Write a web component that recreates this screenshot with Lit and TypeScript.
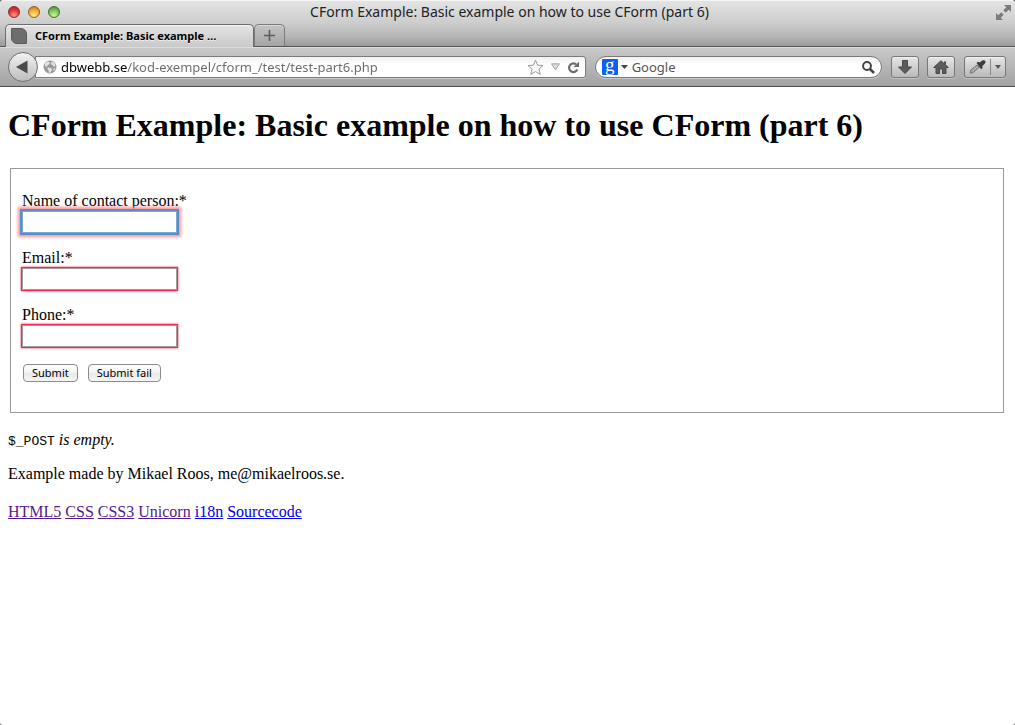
import { LitElement, html, css, nothing } from "lit";
import { customElement, property } from "lit/decorators.js";

@customElement("browser-chrome")
class BrowserChrome extends LitElement {
  @property() pageTitle = "";
  @property() address = "";

  static styles = css`
    :host { display: block; font-family: "Noto Sans", "Open Sans", sans-serif; font-size: 13px; color: #222; }
    * { box-sizing: border-box; }
    svg { display: block; flex: none; }
    button { font: inherit; color: inherit; padding: 0; margin: 0; border: 0; background: none; }
    .top {
      background: linear-gradient(#e4e4e4, #cccccc 50%, #b4b4b4 80%, #9b9b9b);
      border-top: 1px solid #f4f4f4;
      border-bottom: 1px solid #555;
      border-radius: 4px 4px 0 0;
      height: 47px;
    }
    .titlebar { display: grid; grid-template-columns: 1fr auto 1fr; align-items: center; height: 22px; padding: 0 4px 0 8px; }
    .lights { display: flex; gap: 8px; }
    .light { width: 12px; height: 12px; border-radius: 50%; border: 1px solid #6b4a3a; }
    .red { background: radial-gradient(circle at 50% 85%, #ff9a8d, #e8333a 55%, #a52026); border-color: #8b2b2d; }
    .amber { background: radial-gradient(circle at 50% 85%, #ffe88a, #f3ab36 55%, #b56c1c); border-color: #94602a; }
    .green { background: radial-gradient(circle at 50% 85%, #d2f5a0, #7cc254 55%, #3f8430); border-color: #3c7232; }
    .title { font-size: 14px; line-height: 20px; padding-bottom: 1px; }
    .expand { justify-self: end; }
    .tabs { display: flex; padding-left: 5px; height: 24px; padding-top: 1px; }
    .tab {
      position: relative; z-index: 1;
      width: 249px; height: 23px;
      display: flex; align-items: center; gap: 8px;
      padding: 0 5px;
      font-weight: 700; font-size: 11px; color: #000; text-align: left;
      background: linear-gradient(#e4e4e4, #c9c9c9);
      border: 1px solid #6c6c6c; border-bottom: 0;
      border-radius: 5px 5px 0 0;
      box-shadow: inset 0 1px #f5f5f5;
      text-shadow: 0 1px #eee;
    }
    .leaf { width: 16px; height: 16px; background: #6d6d6d; border: 1px solid #5a5a5a; border-radius: 0 6px 0 6px; flex: none; }
    .label { white-space: nowrap; overflow: hidden; text-overflow: ellipsis; }
    .plus {
      width: 31px; height: 22px;
      display: flex; align-items: center; justify-content: center;
      border: 1px solid #7b7b7b; border-bottom: 0; border-radius: 5px 5px 0 0;
      background: linear-gradient(#c4c4c4, #a4a4a4);
      box-shadow: inset 0 1px #d8d8d8;
    }
    .toolbar {
      display: flex; align-items: center;
      height: 40px; padding: 0 9px 0 8px;
      background: linear-gradient(#c9c9c9, #a2a2a2);
      border-top: 1px solid #dcdcdc;
      border-bottom: 1px solid #4c4c4c;
    }
    .back {
      z-index: 1; flex: none; width: 30px; height: 30px; border-radius: 50%;
      border: 1px solid #6f6f6f; background: linear-gradient(#f2f2f2, #bdbdbd);
      display: flex; align-items: center; justify-content: center;
    }
    .field {
      display: flex; align-items: center; height: 22px; min-width: 0;
      background: linear-gradient(#f1f1f1, #ffffff 40%);
      border: 1px solid #7a7a7a;
      box-shadow: 0 1px #c9c9c9;
    }
    .url { flex: 536 1 0; margin-left: -3px; border-radius: 0 3px 3px 0; padding: 0 5px 0 7px; }
    .search { flex: 273 1 0; margin-left: 9px; border-radius: 11px; padding: 0 6px; }
    input { font: inherit; flex: 1; min-width: 0; height: 18px; border: 0; padding: 0; margin: 0; outline: 0; background: none; color: #555; }
    .address {
      margin-left: 4px; color: transparent;
      background: linear-gradient(90deg, #000 66px, #6a6a6a 66px);
      -webkit-background-clip: text; background-clip: text;
    }
    .acts { display: flex; align-items: center; gap: 7px; }
    .engine { display: flex; align-items: center; gap: 3px; margin-right: 4px; }
    .g {
      width: 16px; height: 16px; background: #0f5ff5; color: #fff; border-radius: 1px;
      font: 19px/12px "Liberation Serif", serif; text-align: center;
    }
    .tool {
      flex: none; width: 28px; height: 22px; margin-left: 8px;
      display: flex; align-items: center; justify-content: center;
      border: 1px solid #777; border-radius: 3px;
      background: linear-gradient(#e6e6e6, #bababa);
      box-shadow: inset 0 1px #f0f0f0, 0 1px #c4c4c4;
    }
    .first { margin-left: 9px; }
    .wide { width: 42px; margin-left: 9px; gap: 4px; }
    .bar { width: 1px; height: 16px; background: #8a8a8a; }
  `;

  render() {
    return html`
      <header class="top">
        <div class="titlebar">
          <div class="lights">
            <button class="light red" aria-label="Close"></button>
            <button class="light amber" aria-label="Minimize"></button>
            <button class="light green" aria-label="Zoom"></button>
          </div>
          <div class="title">${this.pageTitle}</div>
          <button class="expand" aria-label="Full screen">
            <svg width="15" height="15" viewBox="0 0 15 15" fill="#7b7b7b">
              <path d="M8 0h7v7l-2.300-2.300-3 3-2.400-2.400 3-3zM7 15H0V8l2.300 2.300 3-3 2.400 2.400-3 3z" />
            </svg>
          </button>
        </div>
        <div class="tabs">
          <button class="tab"><span class="leaf"></span><span class="label">CForm Example: Basic example …</span></button>
          <button class="plus" aria-label="New tab">
            <svg width="11" height="11" viewBox="0 0 11 11"><path d="M5.500 0v11M0 5.500h11" stroke="#5d5d5d" stroke-width="1.600" /></svg>
          </button>
        </div>
      </header>
      <nav class="toolbar">
        <button class="back" aria-label="Back">
          <svg width="16" height="14" viewBox="0 0 16 14"><path d="M1 7 12.500.500v13z" fill="#4a4a4a" /></svg>
        </button>
        <div class="field url">
          <svg width="14" height="14" viewBox="0 0 14 14">
            <circle cx="7" cy="7" r="6.500" fill="#999" />
            <path d="M2 3.500 4.500 1.500l2.500.800-.600 1.900-2 1-.500 1.800L2 6zM8.500 1.500l3 1.500 1 3-1.500.800-1.500-1.800-1.500-.500zM5 7.500l3 .500 1 1.500-1.500 3-1.500.300L5.500 10 4.300 8.800zM10.500 8.500l1.800-.500-1 2.500-1 .500z" fill="#e4e4e4" />
          </svg>
          <input class="address" aria-label="Address" spellcheck="false" .value=${this.address} />
          <div class="acts">
            <button aria-label="Bookmark">
              <svg width="17" height="17" viewBox="0 0 17 17"><path d="M8.500 1.200 10.600 6.100l5.400.500-4.100 3.500 1.300 5.300-4.700-2.800-4.700 2.800 1.300-5.300L1 6.600l5.400-.500z" fill="#f8f8f8" stroke="#9a9a9a" /></svg>
            </button>
            <button aria-label="History">
              <svg width="9" height="8" viewBox="0 0 9 8"><path d="M.500.800h8L4.500 7z" fill="#dcdcdc" stroke="#a5a5a5" /></svg>
            </button>
            <button aria-label="Reload">
              <svg width="13" height="13" viewBox="0 0 13 13"><path d="M10.300 8.600A4.300 4.300 0 1 1 9 3.300" fill="none" stroke="#6e6e6e" stroke-width="2.200" /><path d="M12 .500V6H6.500z" fill="#6e6e6e" /></svg>
            </button>
          </div>
        </div>
        <div class="field search">
          <button class="engine" aria-label="Search engine">
            <span class="g">g</span>
            <svg width="7" height="4" viewBox="0 0 7 4"><path d="M0 0h7L3.500 4z" fill="#444" /></svg>
          </button>
          <input aria-label="Search" .value=${"Google"} />
          <button aria-label="Search">
            <svg width="13" height="13" viewBox="0 0 13 13" fill="none" stroke="#444"><circle cx="5" cy="5" r="3.900" stroke-width="2" /><path d="m8 8 4 4" stroke-width="2.500" /></svg>
          </button>
        </div>
        <button class="tool first" aria-label="Downloads">
          <svg width="14" height="14" viewBox="0 0 14 14"><path d="M4.500.500h5V7h4L7 13.500.500 7h4z" fill="#5c5c5c" stroke="#484848" /></svg>
        </button>
        <button class="tool" aria-label="Home">
          <svg width="16" height="14" viewBox="0 0 16 14"><path d="m8 .700 7.300 6.800H13v6H9.500V9h-3v4.500H3v-6H.700z" fill="#5c5c5c" stroke="#484848" /><path d="M11 1.500h2V5l-2-2z" fill="#484848" /></svg>
        </button>
        <button class="tool wide" aria-label="Color picker">
          <svg width="17" height="14" viewBox="0 0 17 14">
            <path d="M1 13.200 1.800 10 8 5l2.300 2.500L4 12.500z" fill="#aaa" stroke="#777" />
            <path d="m7.500 3 1.700-1.200 1.500.700L13 .500q2.500-.800 3.500.700.400 1.500-1 2.800L13.300 6l.300 2-1.500 1.200z" fill="#3d3d3d" />
          </svg>
          <span class="bar"></span>
          <svg width="6" height="4" viewBox="0 0 6 4"><path d="M0 0h6L3 4z" fill="#555" /></svg>
        </button>
      </nav>
    `;
  }
}

interface Field { id: string; label: string; focused?: boolean }
interface Link { text: string; visited: boolean }

@customElement("app-root")
class AppRoot extends LitElement {
  static styles = css`
    :host { display: block; background: #777; font-family: "Liberation Serif", "Times New Roman", serif; font-size: 16px; line-height: 18px; color: #000; }
    .window { min-height: 100vh; background: #fff; border-radius: 4px 4px 3px 3px; overflow: hidden; }
    .page { padding: 20px 8px 8px; }
    h1 { font-size: 32px; line-height: 37px; margin: 0 0 24px; }
    fieldset { margin: 0 3px 0 2px; padding: 23px 11px 30px; border: 1px solid #999; min-width: 0; }
    .row { display: flex; flex-direction: column; align-items: flex-start; gap: 1px; margin-bottom: 16px; }
    .box {
      box-sizing: border-box; width: 155px; height: 22px; padding: 2px; font: inherit;
      border: 1px solid #a09a9c; border-radius: 0; outline: 0; background: #fff;
      box-shadow: 0 0 0 1px #f5294b, 0 0 2px 1px #ff1f45;
    }
    .focused { border: 1px solid #78a9d2; box-shadow: 0 0 0 2px #5a8fc3, 0 0 3px 4px #ff8f98; }
    .buttons { display: flex; gap: 10px; padding: 1px 0 0 1px; }
    .btn {
      height: 18px; padding: 0 8px; margin: 0; border: 1px solid #8c8c8c; border-radius: 4px;
      background: linear-gradient(#ffffff, #f2f2f2 50%, #e8e8e8 51%, #f6f6f6);
      font: 11px/16px "Noto Sans", "Open Sans", sans-serif; color: #000;
    }
    .note { margin: 18px 0 15px; }
    code { font: 13px/16px "Liberation Mono", "Courier New", monospace; }
    .author { margin: 0 0 20px; }
    .links { margin: 0; }
    a { color: #0000ee; text-decoration: underline; }
    .visited { color: #551a8b; }
  `;

  private fields: Field[] = [
    { id: "name", label: "Name of contact person:*", focused: true },
    { id: "email", label: "Email:*" },
    { id: "phone", label: "Phone:*" },
  ];

  private links: Link[] = [
    { text: "HTML5", visited: true },
    { text: "CSS", visited: true },
    { text: "CSS3", visited: true },
    { text: "Unicorn", visited: true },
    { text: "i18n", visited: false },
    { text: "Sourcecode", visited: false },
  ];

  render() {
    const title = "CForm Example: Basic example on how to use CForm (part 6)";
    return html`
      <div class="window">
        <browser-chrome .pageTitle=${title} .address=${"dbwebb.se/kod-exempel/cform_/test/test-part6.php"}></browser-chrome>
        <main class="page">
          <h1>${title}</h1>
          <form @submit=${(e: Event) => e.preventDefault()}>
            <fieldset>
              ${this.fields.map((f) => html`
                <div class="row">
                  <label for=${f.id}>${f.label}</label>
                  <input id=${f.id} class="box ${f.focused ? "focused" : ""}" type="text" />
                </div>`)}
              <div class="buttons">
                <button class="btn">Submit</button>
                <button class="btn">Submit fail</button>
              </div>
            </fieldset>
          </form>
          <p class="note"><code>$_POST</code> <i>is empty.</i></p>
          <p class="author">Example made by Mikael Roos, me@mikaelroos.se.</p>
          <p class="links">${this.links.map((l, i) => html`${i ? " " : nothing}<a href="#" class=${l.visited ? "visited" : ""}>${l.text}</a>`)}</p>
        </main>
      </div>
    `;
  }
}
